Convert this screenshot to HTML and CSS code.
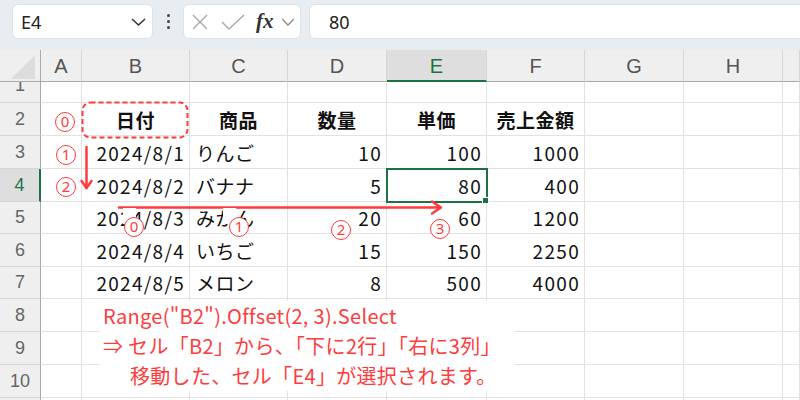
FILE: index.html
```html
<!DOCTYPE html>
<html lang="ja">
<head>
<meta charset="utf-8">
<link rel="stylesheet" href="styles.css">
</head>
<body>
<div class="app">
  <div class="toolbar">
    <div class="namebox">
      <span class="nb-text">E4</span>
      <svg class="nb-chev" width="15" height="8" viewBox="0 0 15 8"><polyline points="1,1 7.5,7 14,1" fill="none" stroke="#333" stroke-width="1.5"/></svg>
    </div>
    <div class="dots"><i></i><i></i><i></i></div>
    <div class="fxbox">
      <svg class="ic-x" width="16" height="16" viewBox="0 0 16 16"><path d="M1 1 L15 15 M15 1 L1 15" stroke="#a8a8a8" stroke-width="1.4" fill="none"/></svg>
      <svg class="ic-ok" width="24" height="16" viewBox="0 0 24 16"><polyline points="1,8 8,15 23,1" fill="none" stroke="#a8a8a8" stroke-width="1.4"/></svg>
      <span class="fx">fx</span>
      <svg class="ic-chev" width="14" height="8" viewBox="0 0 14 8"><polyline points="1,1 7,7 13,1" fill="none" stroke="#888" stroke-width="1.3"/></svg>
    </div>
    <div class="formula">80</div>
  </div>

  <div class="sheet">
    <div class="ch corner"><svg width="24" height="24" viewBox="0 0 24 24"><polygon points="24,0 24,24 0,24" fill="#dcdcdc"/></svg></div>
    <div class="ch">A</div><div class="ch">B</div><div class="ch">C</div><div class="ch">D</div><div class="ch sel">E</div><div class="ch">F</div><div class="ch">G</div><div class="ch">H</div><div class="ch"></div>

    <div class="rh r1"><span>1</span></div>
    <div class="c"></div><div class="c"></div><div class="c"></div><div class="c"></div><div class="c"></div><div class="c"></div><div class="c"></div><div class="c"></div><div class="c"></div>

    <div class="rh">2</div>
    <div class="c"></div><div class="c ctr">日付</div><div class="c ctr">商品</div><div class="c ctr">数量</div><div class="c ctr">単価</div><div class="c ctr">売上金額</div><div class="c"></div><div class="c"></div><div class="c"></div>

    <div class="rh">3</div>
    <div class="c"></div><div class="c r">2024/8/1</div><div class="c l">りんご</div><div class="c r">10</div><div class="c r">100</div><div class="c r">1000</div><div class="c"></div><div class="c"></div><div class="c"></div>

    <div class="rh sel">4</div>
    <div class="c"></div><div class="c r">2024/8/2</div><div class="c l">バナナ</div><div class="c r">5</div><div class="c r">80</div><div class="c r">400</div><div class="c"></div><div class="c"></div><div class="c"></div>

    <div class="rh">5</div>
    <div class="c"></div><div class="c r">2024/8/3</div><div class="c l">みかん</div><div class="c r">20</div><div class="c r">60</div><div class="c r">1200</div><div class="c"></div><div class="c"></div><div class="c"></div>

    <div class="rh">6</div>
    <div class="c"></div><div class="c r">2024/8/4</div><div class="c l">いちご</div><div class="c r">15</div><div class="c r">150</div><div class="c r">2250</div><div class="c"></div><div class="c"></div><div class="c"></div>

    <div class="rh">7</div>
    <div class="c"></div><div class="c r">2024/8/5</div><div class="c l">メロン</div><div class="c r">8</div><div class="c r">500</div><div class="c r">4000</div><div class="c"></div><div class="c"></div><div class="c"></div>

    <div class="rh">8</div>
    <div class="c"></div><div class="c"></div><div class="c"></div><div class="c"></div><div class="c"></div><div class="c"></div><div class="c"></div><div class="c"></div><div class="c"></div>

    <div class="rh">9</div>
    <div class="c"></div><div class="c"></div><div class="c"></div><div class="c"></div><div class="c"></div><div class="c"></div><div class="c"></div><div class="c"></div><div class="c"></div>

    <div class="rh">10</div>
    <div class="c"></div><div class="c"></div><div class="c"></div><div class="c"></div><div class="c"></div><div class="c"></div><div class="c"></div><div class="c"></div><div class="c"></div>

    <div class="rh">11</div>
    <div class="c"></div><div class="c"></div><div class="c"></div><div class="c"></div><div class="c"></div><div class="c"></div><div class="c"></div><div class="c"></div><div class="c"></div>
  </div>

  <div class="selbox"><span class="handle"></span></div>

  <svg class="marks" width="800" height="400" viewBox="0 0 800 400">
    <rect x="82.5" y="102.5" width="105" height="35" rx="8" ry="8" fill="none" stroke="#ff3b3b" stroke-width="2" stroke-dasharray="5 3"/>
    <g stroke="#ff3b3b" stroke-width="2.5" fill="none" stroke-linecap="round" stroke-linejoin="round">
      <line x1="86.5" y1="147" x2="86.5" y2="188"/>
      <polyline points="81.5,181 86.5,188 91.5,181"/>
      <line x1="119" y1="207.5" x2="440" y2="207.5"/>
      <polyline points="432,201.5 441,207.5 432,213.5"/>
    </g>
  </svg>

  <span class="mask m0"></span>
  <span class="mask m1"></span>
  <span class="num n-l0">0</span>
  <span class="num n-l1">1</span>
  <span class="num n-l2">2</span>
  <span class="num n-b0">0</span>
  <span class="num n-b1">1</span>
  <span class="num n-b2">2</span>
  <span class="num n-b3">3</span>

  <div class="note">
    <div class="note-line">Range("B2").Offset(2, 3).Select</div>
    <div class="note-line">⇒ セル「B2」から、「下に2行」「右に3列」</div>
    <div class="note-line indent">移動した、セル「E4」が選択されます。</div>
  </div>
</div>
</body>
</html>
```

FILE: styles.css
```css
* { box-sizing: border-box; }
html, body { margin: 0; padding: 0; }
body {
  width: 800px;
  height: 400px;
  overflow: hidden;
  background: #ffffff;
  font-family: "Noto Sans CJK JP", "Noto Sans", sans-serif;
}
.app {
  position: relative;
  width: 800px;
  height: 400px;
  overflow: hidden;
}

/* ---------- toolbar ---------- */
.toolbar {
  height: 50px;
  background: #e8edf1;
  display: flex;
  align-items: flex-start;
  padding: 4px 0 0 12px;
}
.namebox, .fxbox, .formula {
  height: 35px;
  background: #ffffff;
  border: 1px solid #dde2e6;
  border-radius: 6px;
}
.namebox {
  width: 141px;
  display: flex;
  align-items: center;
  justify-content: space-between;
  padding: 0 6px 0 8px;
}
.nb-text, .formula {
  font-family: "Noto Sans", "Liberation Sans", sans-serif;
  font-size: 18px;
  color: #222;
}
.dots {
  width: 30px;
  height: 35px;
  display: flex;
  flex-direction: column;
  align-items: center;
  justify-content: center;
  gap: 3px;
}
.dots i {
  display: block;
  width: 3px;
  height: 3px;
  border-radius: 50%;
  background: #444;
}
.fxbox {
  width: 118px;
  display: flex;
  align-items: center;
  padding-left: 8px;
}
.ic-ok { margin-left: 13px; }
.fx {
  margin-left: 11px;
  font-family: "Liberation Serif", "DejaVu Serif", serif;
  font-style: italic;
  font-weight: bold;
  font-size: 21px;
  color: #333;
  line-height: 1;
  margin-top: -1px;
}
.ic-chev { margin-left: 7px; }
.formula {
  flex: 1;
  margin-left: 8px;
  margin-right: -12px;
  display: flex;
  align-items: center;
  padding-left: 19px;
}

/* ---------- sheet ---------- */
.sheet {
  display: grid;
  grid-template-columns: 41px 41px 108px 98px 99px 100px 98px 99px 99px 1fr;
  grid-template-rows: 32px 21px 33px 33px 33px 32px 33px 32px 33px 33px 33px 33px;
  font-family: "Noto Sans CJK JP", sans-serif;
  font-size: 19px;
  color: #111;
}
.ch {
  background: #efefef;
  border-right: 1px solid #d6d6d6;
  border-bottom: 1px solid #a9a9a9;
  display: flex;
  align-items: center;
  justify-content: center;
  font-family: "Liberation Sans", "Noto Sans", sans-serif;
  font-size: 20px;
  color: #555;
  padding-top: 2px;
}
.ch.sel {
  background: #dedede;
  border-bottom: 2px solid #1e7145;
  color: #1e7145;
}
.corner {
  align-items: flex-end;
  justify-content: flex-end;
  padding: 0 5px 2px 0;
  border-right: 1px solid #a9a9a9;
}
.corner svg { display: block; }
.rh {
  background: #efefef;
  border-right: 1px solid #a9a9a9;
  border-bottom: 1px solid #d6d6d6;
  display: flex;
  align-items: center;
  justify-content: center;
  font-family: "Liberation Sans", "Noto Sans", sans-serif;
  font-size: 18px;
  color: #666;
}
.rh.sel {
  background: #dedede;
  border-right: 2px solid #1e7145;
  color: #1e7145;
}
.rh.r1 {
  overflow: hidden;
  align-items: flex-end;
}
.rh.r1 span {
  display: block;
  flex: none;
  height: 33px;
  line-height: 33px;
}
.c {
  border-right: 1px solid #e2e2e2;
  border-bottom: 1px solid #e2e2e2;
  display: flex;
  align-items: center;
  white-space: nowrap;
  overflow: visible;
  letter-spacing: 1.3px;
}
.c.r { justify-content: flex-end; padding-right: 4px; }
.c.l { padding-left: 6px; letter-spacing: 0.5px; }
.c.ctr { justify-content: center; font-weight: bold; letter-spacing: 0.5px; }

/* ---------- overlays ---------- */
.selbox {
  position: absolute;
  left: 386px;
  top: 168px;
  width: 102px;
  height: 35px;
  border: 2px solid #1e7145;
}
.handle {
  position: absolute;
  right: -3px;
  bottom: -3px;
  width: 7px;
  height: 7px;
  background: #1e7145;
  border: 1px solid #ffffff;
}
.marks {
  position: absolute;
  left: 0;
  top: 0;
}
.mask {
  position: absolute;
  background: #ffffff;
  width: 13px;
  height: 16px;
}
.m0 { left: 123px; top: 208px; }
.m1 { left: 223px; top: 208px; }
.num {
  position: absolute;
  width: 20px;
  height: 20px;
  border: 1.5px solid #ff3b3b;
  border-radius: 50%;
  background: #ffffff;
  color: #ff3b3b;
  font-family: "Noto Sans", "Liberation Sans", sans-serif;
  font-size: 15px;
  line-height: 17px;
  text-align: center;
}
.n-l0 { left: 55px; top: 112px; }
.n-l1 { left: 56px; top: 145px; }
.n-l2 { left: 56px; top: 177px; }
.n-b0 { left: 124px; top: 217px; }
.n-b1 { left: 229px; top: 217px; }
.n-b2 { left: 331px; top: 220px; }
.n-b3 { left: 430px; top: 219px; }

.note {
  position: absolute;
  left: 100px;
  top: 301px;
  width: 414px;
  height: 90px;
  background: #ffffff;
  padding-left: 3px;
  color: #ff3b3b;
  font-family: "Noto Sans CJK JP", sans-serif;
  font-size: 20px;
  letter-spacing: 0.3px;
  line-height: 30px;
  white-space: nowrap;
}
.note-line.indent { padding-left: 27px; }
```
